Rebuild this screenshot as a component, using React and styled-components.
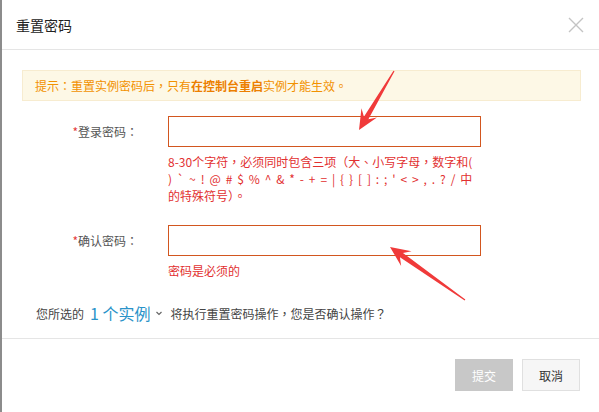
import React from 'react';
import styled, { createGlobalStyle } from 'styled-components';

const GlobalStyle = createGlobalStyle`
  html, body {
    margin: 0;
    padding: 0;
    background: #ffffff;
  }
  body {
    font-family: "Noto Sans CJK TC", "Noto Sans CJK SC", "Noto Sans", "Liberation Sans", sans-serif;
    font-size: 12px;
    color: #333;
  }
`;

const Page = styled.div`
  position: relative;
  width: 599px;
  height: 412px;
  box-sizing: border-box;
  border-left: 2px solid #8c8c8c;
  background: #fff;
  overflow: hidden;
`;

const Header = styled.div`
  height: 50px;
  box-sizing: border-box;
  display: flex;
  align-items: center;
  justify-content: space-between;
  padding: 0 14px 0 14px;
  border-bottom: 1px solid #e5e5e5;
`;

const Title = styled.div`
  font-family: "Noto Sans CJK SC", sans-serif;
  font-size: 14px;
  color: #222;
`;

const CloseBtn = styled.div`
  width: 18px;
  height: 18px;
  display: flex;
  align-items: center;
  justify-content: center;
`;

const Body = styled.div`
  padding: 20px 18px 0 20px;
  height: 289px;
  box-sizing: border-box;
  border-bottom: 1px solid #e5e5e5;
`;

const Notice = styled.div`
  height: 31px;
  box-sizing: border-box;
  display: flex;
  align-items: center;
  padding: 0 12px;
  background: #fdf8e6;
  border: 1px solid #f7ecd0;
  color: #f29100;
  b {
    font-weight: 700;
    color: #ec7f00;
  }
`;

const FormRow = styled.div`
  display: flex;
  align-items: flex-start;
  margin-top: ${(p) => p.$top}px;
`;

const Label = styled.div`
  width: 116px;
  height: 31px;
  line-height: 31px;
  text-align: right;
  color: #555;
  margin-right: 30px;
  span {
    color: #e4393c;
  }
`;

const Field = styled.div`
  width: 313px;
  display: flex;
  flex-direction: column;
`;

const Input = styled.input`
  width: 313px;
  height: 31px;
  box-sizing: border-box;
  border: 1px solid #d2561f;
  outline: none;
  padding: 0 8px;
  font-family: inherit;
  font-size: 12px;
  background: #fff;
`;

const ErrorText = styled.div`
  margin-top: 6px;
  color: #e23030;
  line-height: 17px;
  font-size: 12px;
  word-break: break-all;
`;

const Symbols = styled.span`
  letter-spacing: 1.1px;
`;

const Confirm = styled.div`
  display: flex;
  align-items: center;
  margin-top: 22px;
  padding-left: 14px;
  color: #444;
`;

const Count = styled.span`
  font-size: 16px;
  color: #2a93c9;
  margin: 0 4px 0 6px;
`;

const Footer = styled.div`
  display: flex;
  justify-content: flex-end;
  gap: 9px;
  padding: 20px 19px 0 0;
`;

const Button = styled.button`
  width: 58px;
  height: 32px;
  font-family: inherit;
  font-size: 12px;
  border: 1px solid ${(p) => (p.$primary ? '#c8c8c8' : '#e0e0e0')};
  background: ${(p) => (p.$primary ? '#c8c8c8' : '#f6f6f6')};
  color: ${(p) => (p.$primary ? '#fff' : '#333')};
  cursor: pointer;
`;

const Arrows = styled.svg`
  position: absolute;
  left: -2px;
  top: 0;
  pointer-events: none;
`;

function Arrow({ x1, y1, x2, y2 }) {
  const dx = x2 - x1;
  const dy = y2 - y1;
  const len = Math.sqrt(dx * dx + dy * dy);
  const ux = dx / len;
  const uy = dy / len;
  const px = -uy;
  const py = ux;
  const headLen = 20;
  const headW = 9;
  const bx = x2 - ux * headLen;
  const by = y2 - uy * headLen;
  const nx = x2 - ux * (headLen - 6);
  const ny = y2 - uy * (headLen - 6);
  const pts = [
    [x1 + px * 0.6, y1 + py * 0.6],
    [nx + px * 2.6, ny + py * 2.6],
    [bx + px * headW, by + py * headW],
    [x2, y2],
    [bx - px * headW, by - py * headW],
    [nx - px * 2.6, ny - py * 2.6],
    [x1 - px * 0.6, y1 - py * 0.6],
  ];
  return <polygon points={pts.map((p) => p.join(',')).join(' ')} fill="#f03a3a" />;
}

export default function App() {
  return (
    <>
      <GlobalStyle />
      <Page>
        <Header>
          <Title>重置密码</Title>
          <CloseBtn>
            <svg width="16" height="16" viewBox="0 0 16 16">
              <path d="M1 1L15 15M15 1L1 15" stroke="#c4c4c4" strokeWidth="1.4" />
            </svg>
          </CloseBtn>
        </Header>
        <Body>
          <Notice>
            提示：重置实例密码后，只有<b>在控制台重启</b>实例才能生效。
          </Notice>
          <FormRow $top={15}>
            <Label><span>*</span>登录密码：</Label>
            <Field>
              <Input type="password" />
              <ErrorText>
                8-30个字符，必须同时包含三项（大、小写字母，数字和(
                <br />
                <Symbols>) ` ~ ! @ # $ % ^ &amp; * - + = | {'{'} {'}'} [ ] : ; ' &lt; &gt; , . ? / </Symbols>中
                <br />
                的特殊符号）。
              </ErrorText>
            </Field>
          </FormRow>
          <FormRow $top={21}>
            <Label><span>*</span>确认密码：</Label>
            <Field>
              <Input type="password" />
              <ErrorText>密码是必须的</ErrorText>
            </Field>
          </FormRow>
          <Confirm>
            您所选的<Count>1 个实例</Count>
            <svg width="10" height="10" viewBox="0 0 10 10" style={{ marginRight: 6 }}>
              <path d="M2.5 4L5 6.5L7.5 4" stroke="#666" strokeWidth="1.2" fill="none" />
            </svg>
            将执行重置密码操作，您是否确认操作？
          </Confirm>
        </Body>
        <Footer>
          <Button $primary>提交</Button>
          <Button>取消</Button>
        </Footer>
        <Arrows width="599" height="412">
          <Arrow x1={394} y1={71} x2={359} y2={130} />
          <Arrow x1={465} y1={300} x2={390} y2={247} />
        </Arrows>
      </Page>
    </>
  );
}
